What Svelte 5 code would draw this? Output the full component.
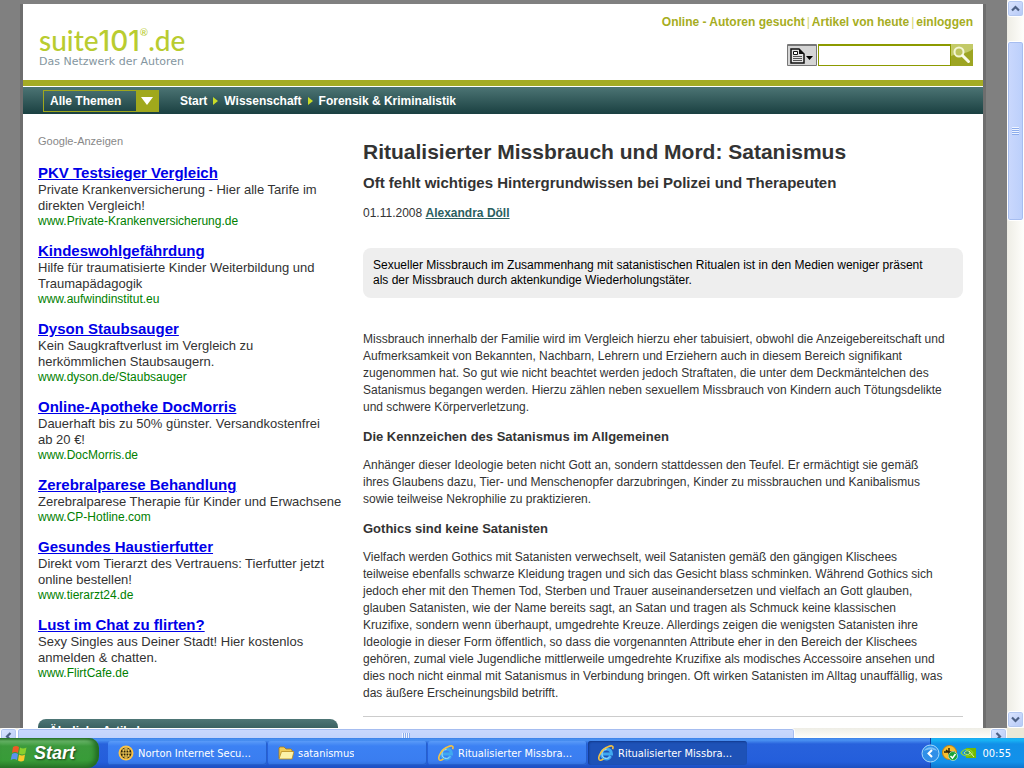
<script>
	const topLinks = ['Online - Autoren gesucht', 'Artikel von heute', 'einloggen'];
	const crumbs = ['Start', 'Wissenschaft', 'Forensik & Kriminalistik'];

	const ads = [
		{
			title: 'PKV Testsieger Vergleich',
			text: 'Private Krankenversicherung - Hier alle Tarife im\ndirekten Vergleich!',
			url: 'www.Private-Krankenversicherung.de'
		},
		{
			title: 'Kindeswohlgefährdung',
			text: 'Hilfe für traumatisierte Kinder Weiterbildung und\nTraumapädagogik',
			url: 'www.aufwindinstitut.eu'
		},
		{
			title: 'Dyson Staubsauger',
			text: 'Kein Saugkraftverlust im Vergleich zu\nherkömmlichen Staubsaugern.',
			url: 'www.dyson.de/Staubsauger'
		},
		{
			title: 'Online-Apotheke DocMorris',
			text: 'Dauerhaft bis zu 50% günster. Versandkostenfrei\nab 20 €!',
			url: 'www.DocMorris.de'
		},
		{
			title: 'Zerebralparese Behandlung',
			text: 'Zerebralparese Therapie für Kinder und Erwachsene',
			url: 'www.CP-Hotline.com'
		},
		{
			title: 'Gesundes Haustierfutter',
			text: 'Direkt vom Tierarzt des Vertrauens: Tierfutter jetzt\nonline bestellen!',
			url: 'www.tierarzt24.de'
		},
		{
			title: 'Lust im Chat zu flirten?',
			text: 'Sexy Singles aus Deiner Stadt! Hier kostenlos\nanmelden & chatten.',
			url: 'www.FlirtCafe.de'
		}
	];

	const sections = [
		{
			text: `Missbrauch innerhalb der Familie wird im Vergleich hierzu eher tabuisiert, obwohl die Anzeigebereitschaft und
Aufmerksamkeit von Bekannten, Nachbarn, Lehrern und Erziehern auch in diesem Bereich signifikant
zugenommen hat. So gut wie nicht beachtet werden jedoch Straftaten, die unter dem Deckmäntelchen des
Satanismus begangen werden. Hierzu zählen neben sexuellem Missbrauch von Kindern auch Tötungsdelikte
und schwere Körperverletzung.`
		},
		{
			heading: 'Die Kennzeichen des Satanismus im Allgemeinen',
			text: `Anhänger dieser Ideologie beten nicht Gott an, sondern stattdessen den Teufel. Er ermächtigt sie gemäß
ihres Glaubens dazu, Tier- und Menschenopfer darzubringen, Kinder zu missbrauchen und Kanibalismus
sowie teilweise Nekrophilie zu praktizieren.`
		},
		{
			heading: 'Gothics sind keine Satanisten',
			text: `Vielfach werden Gothics mit Satanisten verwechselt, weil Satanisten gemäß den gängigen Klischees
teilweise ebenfalls schwarze Kleidung tragen und sich das Gesicht blass schminken. Während Gothics sich
jedoch eher mit den Themen Tod, Sterben und Trauer auseinandersetzen und vielfach an Gott glauben,
glauben Satanisten, wie der Name bereits sagt, an Satan und tragen als Schmuck keine klassischen
Kruzifixe, sondern wenn überhaupt, umgedrehte Kreuze. Allerdings zeigen die wenigsten Satanisten ihre
Ideologie in dieser Form öffentlich, so dass die vorgenannten Attribute eher in den Bereich der Klischees
gehören, zumal viele Jugendliche mittlerweile umgedrehte Kruzifixe als modisches Accessoire ansehen und
dies noch nicht einmal mit Satanismus in Verbindung bringen. Oft wirken Satanisten im Alltag unauffällig, was
das äußere Erscheinungsbild betrifft.`
		}
	];

	const tasks = [
		{ icon: 'norton', label: 'Norton Internet Secu...' },
		{ icon: 'folder', label: 'satanismus' },
		{ icon: 'ie', label: 'Ritualisierter Missbra...' },
		{ icon: 'ie', label: 'Ritualisierter Missbra...', active: true }
	];

	let query = '';
</script>

{#snippet chevron(rotation)}
	<svg width="9" height="9" viewBox="0 0 9 9">
		<path d="M1 6.5 4.5 3 8 6.5" fill="none" stroke="#4d6185" stroke-width="2.2" transform="rotate({rotation} 4.5 4.5)" />
	</svg>
{/snippet}

<div class="desktop">
	<div class="browser">
		<div class="viewport">
			<div class="page">
				<header>
					<a class="logo" href="/" aria-label="suite101.de">
						<span class="name">suite<b>101</b><sup>®</sup>.de</span>
						<span class="tagline">Das Netzwerk der Autoren</span>
					</a>
					<div class="tools">
						<nav class="top-links">
							{#each topLinks as link, i}
								{#if i > 0}<span>|</span>{/if}
								<a href="/">{link}</a>
							{/each}
						</nav>
						<form class="search" on:submit|preventDefault>
							<button class="kind" type="button" aria-label="Suche in">
								<svg width="24" height="16" viewBox="0 0 24 16">
									<path d="M1 1h8l5 5v9H1z" fill="#e4e4e4" stroke="#111" stroke-width="1.5" />
									<path d="M9 1v5h5z" fill="#111" />
									<path d="M3.5 3.5h4v3h-4z" fill="#fff" stroke="#111" />
									<path d="M3 8.5h9M3 10.5h9M3 12.5h9" stroke="#555" />
									<path d="M16 8h7l-3.500 4z" fill="#000" />
								</svg>
							</button>
							<input type="text" aria-label="Suchbegriff" bind:value={query} />
							<button class="go" type="submit" aria-label="Suchen">
								<svg width="22" height="22" viewBox="0 0 22 22">
									<path d="M0 0h22v5C14 11 8 9 0 12z" fill="#c3ca68" />
									<circle cx="8" cy="8" r="4.500" fill="#bdc45c" stroke="#f3f5d4" stroke-width="2" />
									<path d="m11.500 11.500 6 6" stroke="#fafbe8" stroke-width="3" stroke-linecap="round" />
								</svg>
							</button>
						</form>
					</div>
				</header>

				<div class="menu">
					<label class="topics">
						<select aria-label="Themen">
							<option>Alle Themen</option>
						</select>
						<span></span>
					</label>
					<nav class="crumbs">
						{#each crumbs as crumb, i}
							{#if i > 0}<i></i>{/if}
							<a href="/">{crumb}</a>
						{/each}
					</nav>
				</div>

				<div class="columns">
					<aside>
						<p class="ads-label">Google-Anzeigen</p>
						{#each ads as ad}
							<div class="ad">
								<a class="ad-title" href="/">{ad.title}</a>
								<p>{ad.text}</p>
								<a class="ad-url" href="/">{ad.url}</a>
							</div>
						{/each}
						<h4>Ähnliche Artikel</h4>
					</aside>

					<article>
						<h1>Ritualisierter Missbrauch und Mord: Satanismus</h1>
						<h2>Oft fehlt wichtiges Hintergrundwissen bei Polizei und Therapeuten</h2>
						<p class="byline">01.11.2008 <a href="/">Alexandra Döll</a></p>
						<p class="intro">Sexueller Missbrauch im Zusammenhang mit satanistischen Ritualen ist in den Medien weniger präsent{'\n'}als der Missbrauch durch aktenkundige Wiederholungstäter.</p>
						{#each sections as section}
							{#if section.heading}
								<h3>{section.heading}</h3>
							{/if}
							<p class="body">{section.text}</p>
						{/each}
						<hr />
					</article>
				</div>
			</div>
		</div>

		<div class="vbar">
			<button class="arrow" aria-label="Nach oben">{@render chevron(0)}</button>
			<div class="track">
				<div class="thumb"><i></i></div>
			</div>
			<button class="arrow" aria-label="Nach unten">{@render chevron(180)}</button>
		</div>
	</div>

	<div class="hbar">
		<button class="arrow" aria-label="Nach links">{@render chevron(270)}</button>
		<div class="track">
			<div class="thumb"><i></i></div>
		</div>
		<button class="arrow" aria-label="Nach rechts">{@render chevron(90)}</button>
		<div class="corner"></div>
	</div>

	<footer class="taskbar">
		<button class="start">
			<svg width="20" height="20" viewBox="0 0 20 20">
				<path d="M3 4c2-1.500 4-1.500 6 0L8 10c-2-1.300-4-1.300-6 0z" fill="#ee5a26" />
				<path d="M10 4.500c2 1.300 4 1.300 6.500 0l-1.200 6c-2 1.300-4 1.300-6.300 0z" fill="#8ad02e" />
				<path d="M2 11c2-1.300 4-1.300 6 0l-1 6c-2-1.500-4-1.500-6.300 0z" fill="#5b92ee" />
				<path d="M9 11.500c2 1.300 4 1.300 6 0l-1 6c-2 1.300-4 1.300-6 0z" fill="#fbc92a" />
			</svg>
			Start
		</button>
		<div class="tasks">
			{#each tasks as task}
				<button class="task" class:active={task.active}>
					<svg width="16" height="16" viewBox="0 0 16 16">
						{#if task.icon === 'norton'}
							<circle cx="8" cy="8" r="7.500" fill="#fbc54a" />
							<circle cx="8" cy="8" r="5.500" fill="#2b2208" />
							<path d="M8 2.500v11M2.500 8h11M4 5h8M4 11h8" stroke="#f8cf58" fill="none" />
							<ellipse cx="8" cy="8" rx="3" ry="5" stroke="#f8cf58" fill="none" />
						{:else if task.icon === 'folder'}
							<path d="M1 13V3l1-1h4l2 2h5l1 1v8z" fill="#f0cc58" stroke="#a77a16" stroke-width=".8" />
							<path d="M3.500 6.500H16L14 14H1z" fill="#fdf2a8" stroke="#b98b20" stroke-width=".8" />
						{:else}
							<path d="M12.500 11C11.500 13 10 14 8.500 14c-3 0-5-2.200-5-5s2-5 5-5 5 2 5 5H5" fill="none" stroke="#3fa9f0" stroke-width="3" />
							<path d="M12 11.500C11 13 9.500 13.500 8.500 13.500c-3 0-4.500-2-4.500-4.500s1.500-4.500 4.500-4.500" fill="none" stroke="#a6e0ff" />
							<path d="M1.500 15C-1 12 4 4 10 1.800 14 0 16 1 14.500 4.200" fill="none" stroke="#f5c342" stroke-width="1.600" />
							<path d="M1.500 15c1 .6 3-.4 4-1.200" fill="none" stroke="#f5c342" stroke-width="1.600" />
						{/if}
					</svg>
					<span>{task.label}</span>
				</button>
			{/each}
		</div>
		<div class="tray">
			<button class="expand" aria-label="Ausgeblendete Symbole einblenden">
				<svg width="19" height="19" viewBox="0 0 19 19">
					<circle cx="9.500" cy="9.500" r="8.500" fill="#2f8fe8" stroke="#a8dcfb" />
					<path d="M3 7c2-5 11-5 13 0-4-2-9-2-13 0z" fill="#7cc0f6" />
					<path d="m11 6-3.500 3.500L11 13" fill="none" stroke="#fff" stroke-width="2" />
				</svg>
			</button>
			<svg width="16" height="16" viewBox="0 0 16 16">
				<circle cx="7.500" cy="7.500" r="7" fill="#f9bf2e" stroke="#c77f0b" />
				<path d="M2 7h11M7 3v9M4 5l6 5" stroke="#2b2208" stroke-width="1.500" />
				<circle cx="11" cy="11" r="4.500" fill="#18a438" stroke="#e8ffe8" stroke-width=".6" />
				<path d="m8.500 11 2 2 3-4" fill="none" stroke="#fff" stroke-width="1.500" />
			</svg>
			<svg width="16" height="12" viewBox="0 0 16 12">
				<path d="M6 1h10v10H6z" fill="#76b900" />
				<path d="M1 6c3-5 9-5 12 0-3 4-9 4-12 0z" fill="none" stroke="#8fd42c" stroke-width="1.200" />
				<path d="M4 6c2-3 5-3 6 0-1 2-4 2-6 0z" fill="#2f9a66" stroke="#bfe88c" />
				<path d="m9 4 5 6" stroke="#dff5b8" />
			</svg>
			<time>00:55</time>
		</div>
	</footer>
</div>

<style>
	:global(body) {
		overflow: hidden;
	}

	.desktop {
		display: flex;
		flex-direction: column;
		height: 100vh;
		font-family: 'Liberation Sans', Arial, sans-serif;
		font-size: 12px;
		color: #333;
	}

	.desktop :global(*) {
		box-sizing: border-box;
	}

	button {
		border: 0;
		padding: 0;
		font-family: inherit;
		cursor: pointer;
	}

	svg {
		flex: none;
	}

	h1,
	h2,
	h3,
	h4,
	p {
		margin: 0;
	}

	.browser {
		display: flex;
		flex: 1;
		min-height: 0;
	}

	.viewport {
		flex: 1;
		overflow: hidden;
		padding: 4px 1px 0 0;
		background: #808080;
	}

	.page {
		max-width: 966px;
		min-height: 100%;
		margin: 0 auto;
		border: solid #6e6e6e;
		border-width: 0 3px;
		background: #fff;
	}

	header {
		display: flex;
		justify-content: space-between;
		height: 76px;
		padding: 10px 10px 0 16px;
	}

	.logo {
		display: flex;
		flex-direction: column;
		padding-top: 12px;
		font-family: Lato, sans-serif;
		text-decoration: none;
	}

	.name {
		display: flex;
		align-items: baseline;
		font-size: 28px;
		font-weight: 500;
		line-height: 28px;
		color: #b9cc30;
	}

	.name b {
		font: 500 28px/28px Inter, sans-serif;
	}

	.name sup {
		align-self: flex-start;
		font-size: 10px;
		line-height: 12px;
	}

	.tagline {
		font-family: 'DejaVu Sans', sans-serif;
		font-size: 11px;
		line-height: 13px;
		color: #8496a0;
	}

	.tools {
		display: flex;
		flex-direction: column;
		align-items: flex-end;
		gap: 14px;
	}

	.top-links {
		display: flex;
		gap: 2px;
		line-height: 16px;
		color: #d3d66f;
	}

	.top-links a {
		font-weight: bold;
		color: #a6ad22;
		text-decoration: none;
	}

	.search {
		display: flex;
		height: 22px;
	}

	.kind {
		display: flex;
		align-items: center;
		justify-content: center;
		width: 30px;
		margin-right: 1px;
		border: 1px solid #777;
		border-top-width: 2px;
		border-radius: 1px;
		background: #d5d5d5;
	}

	.search input {
		width: 133px;
		border: 1px solid #8c9a00;
		border-top-width: 2px;
		padding: 0 4px;
		font-size: 12px;
		outline: 0;
	}

	.go {
		width: 22px;
		background: #9da522;
	}

	.go svg {
		display: block;
	}

	.menu {
		display: flex;
		align-items: center;
		gap: 21px;
		height: 34px;
		border-top: 6px solid #a4ab25;
		padding: 1px 20px 0;
		background: linear-gradient(#4e7676, #1a4041);
		box-shadow: inset 0 1px #fff;
	}

	.topics {
		display: flex;
		width: 116px;
		height: 22px;
		border: 1px solid #a0a81c;
		margin-top: 1px;
	}

	.topics select {
		flex: 1;
		width: 80px;
		appearance: none;
		border: 0;
		padding: 0 6px;
		background: transparent;
		font: bold 12px 'Liberation Sans', Arial, sans-serif;
		color: #fff;
	}

	.topics span {
		display: flex;
		align-items: center;
		justify-content: center;
		width: 22px;
		background: #a0a81c;
	}

	.topics span::before {
		content: '';
		border: 6px solid transparent;
		border-top: 8px solid #fff;
		border-bottom: 0;
	}

	.crumbs {
		display: flex;
		align-items: center;
		gap: 6px;
	}

	.crumbs a {
		font-weight: bold;
		color: #fff;
		text-decoration: none;
	}

	.crumbs i {
		border: 4px solid transparent;
		border-left: 5px solid #c8dc28;
		border-right: 0;
	}

	.columns {
		display: grid;
		grid-template-columns: 300px minmax(0, 600px);
		gap: 25px;
		padding: 20px 20px 0 15px;
	}

	.ads-label {
		margin-bottom: 16px;
		font-size: 11px;
		line-height: 14px;
		color: #888;
	}

	.ad {
		display: flex;
		flex-direction: column;
		align-items: flex-start;
		margin-bottom: 13px;
		font-size: 13px;
		line-height: 16px;
		white-space: pre;
	}

	.ad-title {
		font-size: 15px;
		font-weight: bold;
		line-height: 18px;
		color: #0000e8;
	}

	.ad-url {
		font-size: 12px;
		line-height: 15px;
		color: #008000;
		text-decoration: none;
	}

	aside h4 {
		margin-top: 38px;
		border-radius: 8px 8px 0 0;
		padding: 4px 11px;
		background: linear-gradient(#4e7676, #1a4041);
		font-size: 12px;
		line-height: 16px;
		color: #fff;
	}

	h1 {
		margin-top: 4px;
		font-size: 21px;
		line-height: 28px;
	}

	h2 {
		margin-top: 7px;
		font-size: 15px;
		line-height: 20px;
	}

	.byline {
		margin-top: 12px;
		line-height: 16px;
	}

	.byline a {
		font-weight: bold;
		color: #2b6060;
	}

	.intro {
		margin: 27px 0 33px;
		border-radius: 8px;
		padding: 10px;
		background: #eee;
		line-height: 15px;
		white-space: pre-line;
		color: #000;
	}

	.body {
		line-height: 17px;
		white-space: pre-line;
	}

	h3 {
		margin: 12px 0;
		font-size: 13px;
		line-height: 17px;
	}

	hr {
		margin: 14px 0 0;
		border: 0;
		border-top: 1px solid #ccc;
	}

	.vbar {
		display: flex;
		flex-direction: column;
		width: 17px;
		background: linear-gradient(90deg, #eeede5, #fefefb);
	}

	.arrow {
		display: flex;
		flex: none;
		align-items: center;
		justify-content: center;
		width: 17px;
		height: 17px;
		border: 1px solid #fff;
		border-radius: 3px;
		background: linear-gradient(135deg, #dce6ff, #b4c8f6);
		box-shadow: inset 0 0 0 1px #b4c8f0;
	}

	.track {
		display: flex;
		flex: 1;
	}

	.vbar .track {
		flex-direction: column;
	}

	.thumb {
		display: flex;
		align-items: center;
		justify-content: center;
		border: 1px solid #fff;
		border-radius: 3px;
		box-shadow: inset 0 0 0 1px #a6bdf0;
	}

	.vbar .thumb {
		height: 26%;
		margin-top: 24px;
		background: linear-gradient(90deg, #cad8fd, #bbcffb);
	}

	.vbar .thumb i {
		width: 7px;
		height: 8px;
		background: repeating-linear-gradient(#eef4ff 0 1px, #8cacec 1px 2px);
	}

	.hbar {
		display: flex;
		flex: none;
		height: 10px;
		overflow: hidden;
		background: linear-gradient(#eeede5, #fefefb);
	}

	.hbar .thumb {
		width: 80%;
		height: 17px;
		background: linear-gradient(#cad8fd, #bbcffb);
	}

	.hbar .thumb i {
		width: 8px;
		height: 7px;
		background: repeating-linear-gradient(90deg, #eef4ff 0 1px, #8cacec 1px 2px);
	}

	.corner {
		width: 17px;
		background: #ece9d8;
	}

	.taskbar {
		display: flex;
		flex: none;
		height: 30px;
		background: linear-gradient(#3a80e8, #4b93f2 2px, #2862dc 6px, #245edb 24px, #1d4fc0);
		font-family: 'DejaVu Sans Condensed', 'DejaVu Sans', sans-serif;
		font-size: 11px;
		color: #fff;
	}

	.start {
		display: flex;
		align-items: center;
		gap: 4px;
		width: 99px;
		padding-left: 10px;
		border-radius: 0 10px 12px 0;
		background: linear-gradient(#2c7a2c, #68b568 3px, #3c9a3c 8px, #389c38 22px, #2a7a2a);
		box-shadow: inset -4px 0 5px #226a22;
		font: italic bold 18px 'Liberation Sans', Arial, sans-serif;
		color: #fff;
		text-shadow: 1px 1px 2px #1a401a;
	}

	.tasks {
		display: flex;
		flex: 1;
		gap: 1px;
		min-width: 0;
		padding: 3px 0 3px 9px;
	}

	.task {
		display: flex;
		align-items: center;
		gap: 4px;
		flex: 0 1 159px;
		min-width: 0;
		border-radius: 3px;
		padding: 0 10px;
		background: linear-gradient(#5a9bf8, #3c81f3 5px, #3a7df0 20px, #3270dc);
		box-shadow: inset -1px -1px #2660cc;
		font-size: 11px;
		white-space: nowrap;
		color: #fff;
	}

	.task span {
		overflow: hidden;
	}

	.task.active {
		background: #1e52b7;
		box-shadow: inset 1px 1px 2px #123a8c;
	}

	.tray {
		display: flex;
		align-items: center;
		gap: 2px;
		padding-right: 13px;
		border-left: 1px solid #103fa0;
		background: linear-gradient(#1aa8f0, #18b5f5 2px, #1290e8 6px, #1291ea 24px, #0f74cc);
	}

	.expand {
		height: 19px;
		margin-left: -10px;
		background: none;
	}

	.tray time {
		margin-left: 4px;
	}
</style>
